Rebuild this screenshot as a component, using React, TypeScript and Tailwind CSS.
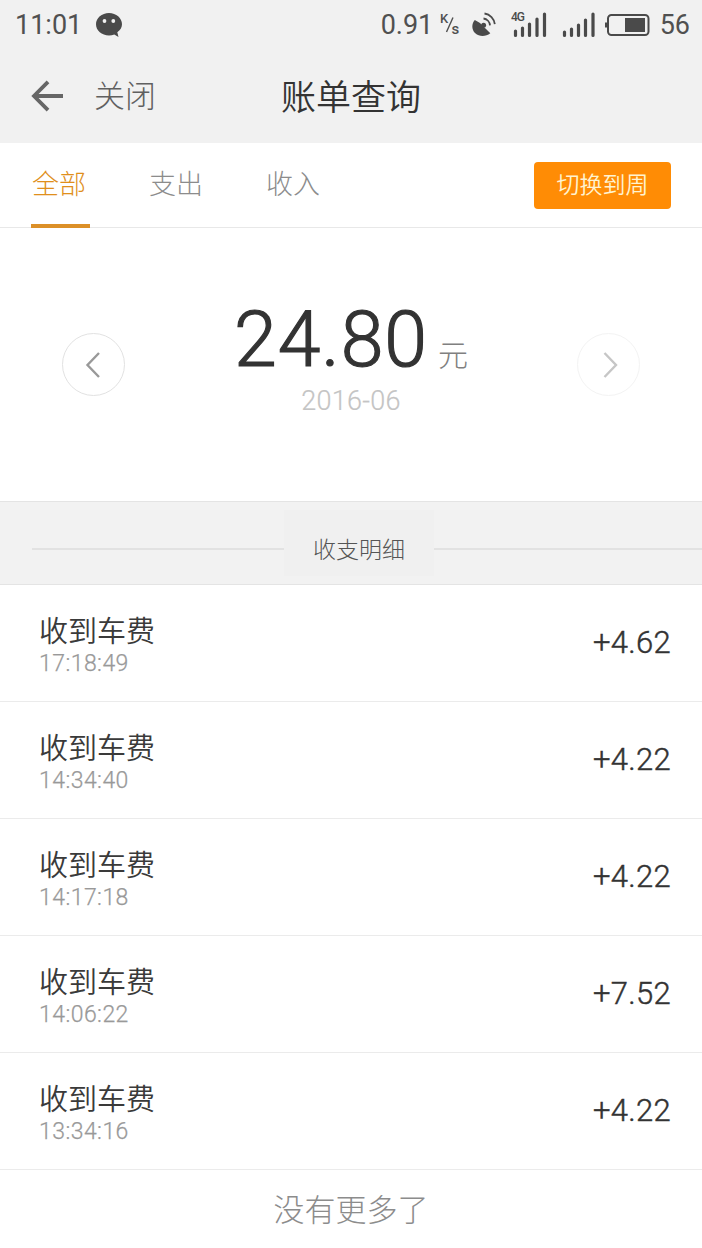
import { useState } from "react";

interface Bill {
  time: string;
  amount: string;
}

const bills: Bill[] = [
  { time: "17:18:49", amount: "+4.62" },
  { time: "14:34:40", amount: "+4.22" },
  { time: "14:17:18", amount: "+4.22" },
  { time: "14:06:22", amount: "+7.52" },
  { time: "13:34:16", amount: "+4.22" },
];

const tabs = ["全部", "支出", "收入"];

function StatusBar() {
  return (
    <div className="flex h-[50px] items-center justify-between pr-3 pl-[15px] text-[27px] leading-none text-[#505050]">
      <div className="flex items-center">
        <span className="w-[80px]">11:01</span>
        <svg width="28" height="26" viewBox="0 0 28 26">
          <path
            d="M14 1C6.800 1 1 6 1 12.300s5.800 11.200 13 11.200c1.900 0 3.700-.3 5.300-1l4.200 2.500-1.200-4.700c3-2 4.700-4.800 4.700-8C27 6 21.200 1 14 1z"
            fill="#4a4a4a"
          />
          <circle cx="9.500" cy="9" r="1.900" fill="#f1f1f1" />
          <circle cx="18.300" cy="9" r="1.900" fill="#f1f1f1" />
        </svg>
      </div>
      <div className="flex items-center">
        <span className="w-[58px]">0.91</span>
        <svg width="22" height="26" viewBox="0 0 22 26" className="mr-2.5 text-[13px] font-medium" fill="#505050">
          <text x="1" y="11">K</text>
          <path d="M14 5.500 7.500 20" stroke="#505050" strokeWidth="1.400" />
          <text x="12.500" y="22" fontSize="15">s</text>
        </svg>
        <svg width="26" height="26" viewBox="0 0 26 26" className="mr-[13px]">
          <path
            d="M3.800 8C.3 12 .6 17.800 4.300 21.300c4 3.700 10.500 3.600 15 0L14.500 16.600 9 11z"
            fill="#4a4a4a"
          />
          <circle cx="12.600" cy="13.200" r="2.500" fill="#4a4a4a" />
          <path
            d="M12.500 6.500a7.500 7.500 0 0 1 6.500 6.800M13.500 1.500a12 12 0 0 1 10.300 10.700"
            fill="none"
            stroke="#4a4a4a"
            strokeWidth="1.800"
          />
        </svg>
        <svg width="37" height="28" viewBox="0 0 37 28" className="mr-3.5">
          <text x="1" y="9.500" fontSize="12" fontWeight="500" fill="#4a4a4a" textLength="14">
            4G
          </text>
          <g stroke="#4a4a4a" strokeWidth="3.200" strokeLinecap="round">
            <path d="M5.500 20v4.500M12.500 17v7.500M19.500 13v11.500M27 8v16.500M34.500 3v21.500" />
          </g>
        </svg>
        <svg width="34" height="28" viewBox="0 0 34 28" className="mr-2.5">
          <g stroke="#4a4a4a" strokeWidth="3.200" strokeLinecap="round">
            <path d="M3.500 21v3.500M10.500 18v6.500M17.500 14v10.500M24.500 9v15.500M32 3v21.500" />
          </g>
        </svg>
        <svg width="45" height="24" viewBox="0 0 45 24" className="mr-2.5">
          <rect x="3" y="2" width="40.500" height="20" rx="3.500" fill="none" stroke="#4a4a4a" strokeWidth="2" />
          <path d="M1.200 9.500v5" stroke="#4a4a4a" strokeWidth="2.400" />
          <rect x="20" y="5" width="20" height="14" fill="#4a4a4a" />
        </svg>
        <span>56</span>
      </div>
    </div>
  );
}

function ArrowButton({ direction }: { direction: "left" | "right" }) {
  const left = direction === "left";
  return (
    <button
      className={`flex size-[63px] items-center justify-center rounded-full border ${
        left ? "border-[#e2e2e2] pr-0.5 text-[#999]" : "border-[#f3f3f3] pl-0.5 text-[#c6c6c6]"
      }`}
      aria-label={left ? "上个月" : "下个月"}
    >
      <svg width="16" height="28" viewBox="0 0 16 28" fill="none" stroke="currentColor" strokeWidth="2.400">
        <path d={left ? "M14 2 2.500 14 14 26" : "M2.500 2 14 14 2.500 26"} />
      </svg>
    </button>
  );
}

export default function App() {
  const [active, setActive] = useState(0);

  return (
    <div className="h-[1248px] w-[702px] overflow-hidden bg-white font-[Roboto,'Noto_Sans_CJK_SC',sans-serif]">
      <header className="h-[143px] bg-[#f1f1f1]">
        <StatusBar />
        <div className="grid h-[92px] grid-cols-[1fr_auto_1fr] items-center">
          <div className="flex items-center pl-[31px]">
            <svg width="33" height="32" viewBox="0 0 33 32" fill="none" stroke="#666" strokeWidth="3.800">
              <path d="M17 1.800 3 16l14 14.200M3 16h29" />
            </svg>
            <span className="ml-[30px] text-[31px] leading-none font-light text-[#606060]">关闭</span>
          </div>
          <h1 className="pt-1 text-[35px] leading-none font-[350] text-[#333]">账单查询</h1>
        </div>
      </header>

      <nav className="flex h-[85px] items-start justify-between border-b border-[#e8e8e8] pr-[31px] pl-[31px]">
        <div className="flex gap-[58px] font-light">
          {tabs.map((tab, i) => (
            <button
              key={tab}
              onClick={() => setActive(i)}
              className={`h-[85px] w-[59px] border-b-4 pt-1 pl-px text-left text-[27px] leading-none ${
                i === active ? "border-[#dc9028] text-[#e08f1c]" : "border-transparent text-[#8c8c8c]"
              }`}
            >
              {tab}
            </button>
          ))}
        </div>
        <button className="mt-[19px] h-[47px] w-[137px] rounded bg-[#ff8c05] text-[23px] leading-none font-[350] text-[#fff3d0]">
          切换到周
        </button>
      </nav>

      <section className="flex h-[273px] items-center justify-between px-[62px]">
        <ArrowButton direction="left" />
        <div className="pb-[18px] text-center">
          <div className="flex items-baseline">
            <span className="text-[77px] leading-[90px] font-light tracking-[0.9px] text-[#333] [-webkit-text-stroke:1.2px_#333]">
              24.80
            </span>
            <span className="ml-2.5 text-[30px] leading-none font-light text-[#808080]">元</span>
          </div>
          <div className="text-[27px] leading-8 font-light tracking-[0.3px] text-[#c4c4c4] [-webkit-text-stroke:0.2px_#c4c4c4]">
            2016-06
          </div>
        </div>
        <ArrowButton direction="right" />
      </section>

      <div className="flex h-[84px] items-center border-y border-[#e4e4e4] bg-[#f2f2f2] pl-8">
        <div className="mt-[11px] h-0.5 w-[252px] bg-[#e2e2e2]" />
        <h2 className="flex h-[66px] w-[150px] items-center justify-center bg-[#f0f0f0] pt-[15px] text-[23px] leading-none font-light text-[#555]">
          收支明细
        </h2>
        <div className="mt-[11px] h-0.5 flex-1 bg-[#e2e2e2]" />
      </div>

      <ul>
        {bills.map((bill) => (
          <li
            key={bill.time}
            className="flex h-[117px] items-center justify-between border-b border-[#ebebeb] pr-[31px] pl-[39px]"
          >
            <div className="pt-2.5">
              <p className="text-[29px] leading-8 font-[350] text-[#3a3a3a]">收到车费</p>
              <p className="text-[23px] leading-8 font-light tracking-[0.45px] text-[#999] [-webkit-text-stroke:0.25px_#999]">
                {bill.time}
              </p>
            </div>
            <span className="pb-px text-[31px] leading-none font-light tracking-[0.3px] text-[#333] [-webkit-text-stroke:0.45px_#333]">
              {bill.amount}
            </span>
          </li>
        ))}
      </ul>

      <p className="pt-[25px] text-center text-[31px] leading-8 font-light text-[#8c8c8c]">没有更多了</p>
    </div>
  );
}
